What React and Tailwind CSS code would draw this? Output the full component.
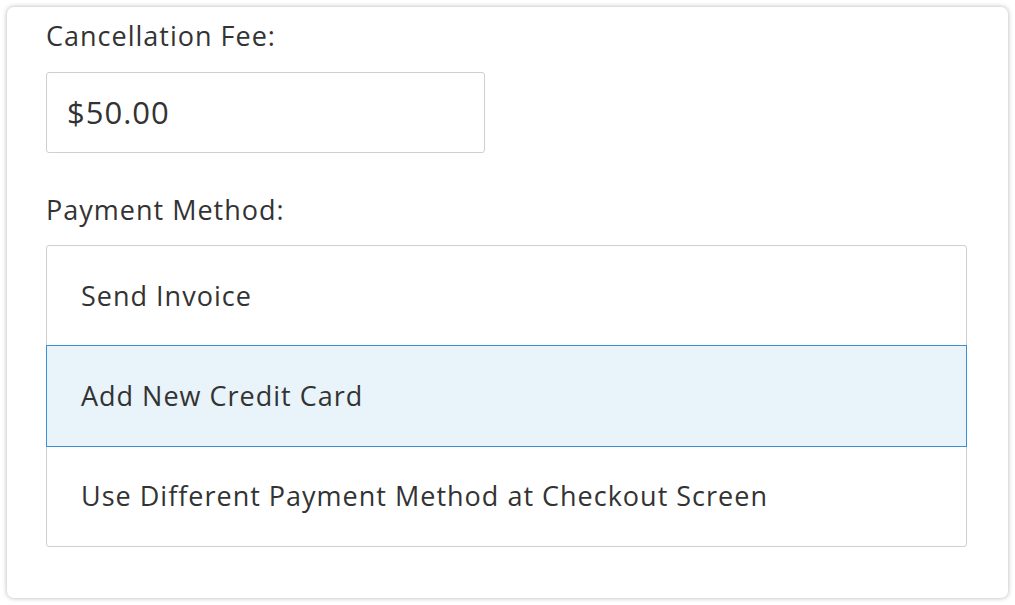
import React from "react";

const methods = [
  { id: 1, label: "Send Invoice" },
  { id: 2, label: "Add New Credit Card", selected: true },
  { id: 3, label: "Use Different Payment Method at Checkout Screen" },
];

const App = () => {
  return (
    <div className="w-[1015px] h-[605px] bg-white p-[7px] font-['Open_Sans',sans-serif] text-[#333333] tracking-[1px]">
      <div className="h-[591px] rounded-[7px] bg-white shadow-[0_0_5px_rgba(0,0,0,0.3)] pl-[39px] pr-[41px] pt-[15px]">
        <p className="text-[27px] leading-[28px] h-[28px]">Cancellation Fee:</p>
        <div className="mt-[22px] w-[439px] h-[81px] border border-[#cfcfcf] rounded-[3px] flex items-center pl-[20px] text-[31px]">
          <span>$</span>
          <span>50.00</span>
        </div>
        <p className="mt-[43px] text-[27px] leading-[28px] h-[28px]">Payment Method:</p>
        <div className="mt-[21px] border border-[#cfcfcf] rounded-[3px]">
          {methods.map((m) => (
            <div
              key={m.id}
              className={
                m.selected
                  ? "h-[100px] flex items-center pl-[34px] text-[27px] bg-[#e8f3fa] outline outline-1 outline-[#3a8fd9] relative"
                  : "h-[100px] flex items-center pl-[34px] text-[27px]"
              }
            >
              {m.label}
            </div>
          ))}
        </div>
      </div>
    </div>
  );
};

export default App;
